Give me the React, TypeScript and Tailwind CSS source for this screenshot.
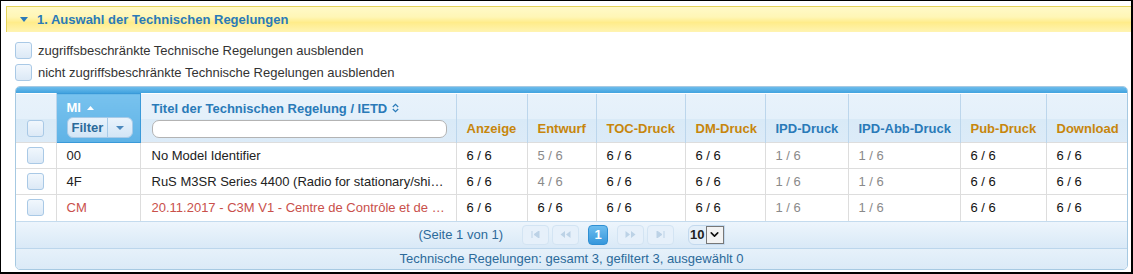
import { ChevronDown } from 'lucide-react';

type Col = { label: string; w: number; blue?: boolean };

const cols: Col[] = [
  { label: 'Anzeige', w: 71 },
  { label: 'Entwurf', w: 69 },
  { label: 'TOC-Druck', w: 89 },
  { label: 'DM-Druck', w: 80 },
  { label: 'IPD-Druck', w: 83, blue: true },
  { label: 'IPD-Abb-Druck', w: 112, blue: true },
  { label: 'Pub-Druck', w: 86 },
  { label: 'Download', w: 83 },
];

const rows = [
  { mi: '00', title: 'No Model Identifier', vals: ['6 / 6', '5 / 6', '6 / 6', '6 / 6', '1 / 6', '1 / 6', '6 / 6', '6 / 6'], red: false },
  { mi: '4F', title: 'RuS M3SR Series 4400 (Radio for stationary/shipborne applications)', vals: ['6 / 6', '4 / 6', '6 / 6', '6 / 6', '1 / 6', '1 / 6', '6 / 6', '6 / 6'], red: false },
  { mi: 'CM', title: '20.11.2017 - C3M V1 - Centre de Contrôle et de Commandement', vals: ['6 / 6', '6 / 6', '6 / 6', '6 / 6', '1 / 6', '1 / 6', '6 / 6', '6 / 6'], red: true },
];

function Box() {
  return (
    <span className="block w-[17px] h-[17px] rounded-[3px] border border-[#a9c9e6] bg-[linear-gradient(#f1f7fd,#dce9f6)]" />
  );
}

function PagerBtn({ children }: { children: React.ReactNode }) {
  return (
    <span className="flex items-center justify-center w-[27px] h-[20px] rounded-[4px] border border-[#d3e4f3] bg-[#e6f0fa] text-[#bcd2e6]">
      {children}
    </span>
  );
}

export default function App() {
  return (
    <div className="w-[1133px] h-[274px] border-t border-l border-r-2 border-b-2 border-black bg-white pl-[5px] pt-[5px] overflow-hidden font-['Liberation_Sans',Arial,sans-serif]">
      {/* Abschnittskopf */}
      <div className="h-[26px] flex items-center border-t border-l border-[#e4d35a] bg-[linear-gradient(#fff9c8_0%,#fff6b6_40%,#ffec8a_62%,#fff4b2_100%)]">
        <svg width="8" height="5" viewBox="0 0 8 5" className="ml-[13px] mr-[9px]">
          <path d="M0 0h8L4 5z" fill="#2a7ab8" />
        </svg>
        <span className="text-[13px] font-bold text-[#2a7ab8]">1. Auswahl der Technischen Regelungen</span>
      </div>

      <div className="pl-[9px] pr-[3px] pt-[10px]">
        <div className="flex flex-col gap-[5px] text-[13px] text-[#333]">
          <label className="flex items-center gap-[6px] h-[17px]">
            <Box />
            <span className="leading-[17px]">zugriffsbeschränkte Technische Regelungen ausblenden</span>
          </label>
          <label className="flex items-center gap-[6px] h-[17px]">
            <Box />
            <span className="leading-[17px]">nicht zugriffsbeschränkte Technische Regelungen ausblenden</span>
          </label>
        </div>

        {/* Tabelle */}
        <div className="mt-[5px] w-[1113px] rounded-[5px] border border-[#a6c9e2] overflow-hidden">
          <div className="h-[6px] bg-[linear-gradient(#6cbcec,#42a3df)]" />
          <table className="table-fixed border-collapse w-full text-[13px]">
            <colgroup>
              <col className="w-[40px]" />
              <col className="w-[84px]" />
              <col className="w-[316px]" />
              {cols.map((c) => (
                <col key={c.label} style={{ width: c.w }} />
              ))}
            </colgroup>
            <thead>
              <tr className="h-[49px] bg-[linear-gradient(#e8f2fb_0%,#e4f0fa_50%,#d9eaf7_52%,#dcebf8_100%)]">
                <th className="border-r border-[#bcd6ec] align-bottom pb-[5px]">
                  <div className="flex justify-center">
                    <Box />
                  </div>
                </th>
                <th className="border border-[#3a9ad9] bg-[linear-gradient(#78c2ee,#5fb3e6)] align-top pt-[6px] pl-[10px] text-left">
                  <div className="flex items-center gap-[6px] text-white font-bold leading-[15px]">
                    MI
                    <svg width="7" height="4" viewBox="0 0 7 4">
                      <path d="M0 4h7L3.5 0z" fill="#fff" />
                    </svg>
                  </div>
                  <div className="mt-[2px] flex h-[21px] w-[66px] rounded-[6px] border border-[#a8cbe8] bg-[linear-gradient(#e9f3fc,#d3e6f6)] text-[#2c6a9a] font-bold">
                    <span className="flex items-center pl-[4px] pr-[4px] border-r border-[#a8cbe8]">Filter</span>
                    <span className="flex flex-1 items-center justify-center">
                      <svg width="8" height="4" viewBox="0 0 8 4">
                        <path d="M0 0h8L4 4z" fill="#4a88bd" />
                      </svg>
                    </span>
                  </div>
                </th>
                <th className="border-r border-[#bcd6ec] align-top pt-[7px] pl-[11px] pr-[8px] text-left">
                  <div className="flex items-center gap-[5px] text-[#2a7ab8] font-bold leading-[15px]">
                    Titel der Technischen Regelung / IETD
                    <svg width="7" height="10" viewBox="0 0 7 10">
                      <path d="M0.8 4L3.5 1.3L6.2 4M0.8 6L3.5 8.7L6.2 6" fill="none" stroke="#2a7ab8" strokeWidth="1.2" />
                    </svg>
                  </div>
                  <div className="mt-[4px] h-[18px] w-[295px] rounded-[7px] border border-[#b3b3b3] bg-white" />
                </th>
                {cols.map((c, i) => (
                  <th
                    key={c.label}
                    className={`align-bottom pb-[4px] pl-[10px] text-left font-bold whitespace-nowrap ${i < cols.length - 1 ? 'border-r border-[#bcd6ec]' : ''} ${c.blue ? 'text-[#2a7ab8]' : 'text-[#c7860c]'}`}
                  >
                    {c.label}
                  </th>
                ))}
              </tr>
            </thead>
            <tbody>
              {rows.map((r) => (
                <tr key={r.mi} className="h-[26px] border-t border-[#dddddd]">
                  <td className="border-r border-[#dddddd]">
                    <div className="flex justify-center">
                      <Box />
                    </div>
                  </td>
                  <td className={`border-r border-[#dddddd] pl-[10px] ${r.red ? 'text-[#c9504b]' : 'text-[#222]'}`}>{r.mi}</td>
                  <td className={`border-r border-[#dddddd] pl-[11px] pr-[8px] truncate ${r.red ? 'text-[#c9504b]' : 'text-[#222]'}`}>{r.title}</td>
                  {r.vals.map((v, i) => (
                    <td
                      key={i}
                      className={`pl-[10px] whitespace-nowrap ${i < r.vals.length - 1 ? 'border-r border-[#dddddd]' : ''} ${v === '6 / 6' ? 'text-[#111]' : 'text-[#8a8a8a]'}`}
                    >
                      {v}
                    </td>
                  ))}
                </tr>
              ))}
            </tbody>
          </table>

          {/* Pager */}
          <div className="h-[27px] border-t border-[#c4dbee] bg-[linear-gradient(#edf5fc,#d9e9f7)] flex items-center justify-center text-[13px] text-[#2c6a9a]">
            <span className="mr-[19px]">(Seite 1 von 1)</span>
            <div className="flex items-center gap-[3px]">
              <PagerBtn>
                <svg width="9" height="7" viewBox="0 0 9 7"><path d="M1 0v7M8 0v7L3 3.5z" stroke="#bcd2e6" fill="#bcd2e6" /></svg>
              </PagerBtn>
              <PagerBtn>
                <svg width="11" height="7" viewBox="0 0 11 7"><path d="M5 0v7L0.5 3.5zM10.5 0v7L6 3.5z" fill="#bcd2e6" /></svg>
              </PagerBtn>
              <span className="mx-[6px] flex items-center justify-center w-[20px] h-[20px] rounded-[4px] border border-[#2f8fd3] bg-[linear-gradient(#6dbdef,#3697dc)] text-white font-bold">
                1
              </span>
              <PagerBtn>
                <svg width="11" height="7" viewBox="0 0 11 7"><path d="M0.5 0v7L5 3.5zM6 0v7l4.5-3.5z" fill="#bcd2e6" /></svg>
              </PagerBtn>
              <PagerBtn>
                <svg width="9" height="7" viewBox="0 0 9 7"><path d="M1 0v7L6 3.5zM8 0v7" stroke="#bcd2e6" fill="#bcd2e6" /></svg>
              </PagerBtn>
            </div>
            <div className="ml-[14px] flex items-center h-[20px] rounded-l-[6px] border border-[#c3d9ee] bg-[#e4eff9] pl-[1px]">
              <span className="font-bold text-[#222] text-[13px] pr-[1px]">10</span>
              <span className="flex items-center justify-center w-[18px] h-[18px] border border-[#777] bg-[#f3f3f3]">
                <ChevronDown size={13} strokeWidth={3} color="#111" />
              </span>
            </div>
          </div>

          {/* Status */}
          <div className="h-[21px] border-t border-[#bcd6ec] bg-[linear-gradient(#e6f1fa,#dbeaf7)] flex items-center justify-center text-[13px] text-[#2c6a9a]">
            Technische Regelungen: gesamt 3, gefiltert 3, ausgewählt 0
          </div>
        </div>
      </div>
    </div>
  );
}
